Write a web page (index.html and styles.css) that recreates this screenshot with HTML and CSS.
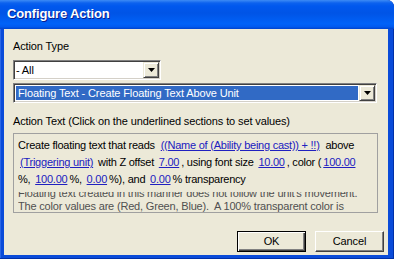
FILE: index.html
```html
<!DOCTYPE html>
<html>
<head>
<meta charset="utf-8">
<link rel="stylesheet" href="styles.css">
</head>
<body>
<div class="window">
  <div class="titlebar"><span class="title">Configure Action</span></div>
  <div class="client">
    <div class="label">Action Type</div>
    <div class="combo combo-short">
      <div class="combo-field"><span class="combo-text">- All</span></div>
      <div class="combo-btn"><svg width="7" height="4" viewBox="0 0 7 4"><path d="M0 0H7L3.5 4Z" fill="#000"/></svg></div>
    </div>
    <div class="combo combo-long">
      <div class="combo-field"><span class="combo-sel">Floating Text - Create Floating Text Above Unit</span></div>
      <div class="combo-btn"><svg width="7" height="4" viewBox="0 0 7 4"><path d="M0 0H7L3.5 4Z" fill="#000"/></svg></div>
    </div>
    <div class="label label-text">Action Text (Click on the underlined sections to set values)</div>
    <div class="textbox">
      <div class="sentence">
        <div class="line">Create floating text that reads <span class="lnk lnk-wide">((Name of (Ability being cast)) + !!)</span> above</div>
        <div class="line"><span class="lnk">(Triggering unit)</span> with Z offset <span class="lnk">7.00</span>, using font size <span class="lnk">10.00</span>, color (<span class="lnk">100.00</span></div>
        <div class="line">%, <span class="lnk">100.00</span>%, <span class="lnk">0.00</span>%), and <span class="lnk">0.00</span>% transparency</div>
      </div>
      <div class="desc-clip">
        <div class="desc">
          <div class="dline">Floating text created in this manner does not follow the unit's movement.</div>
          <div class="dline">The color values are (Red, Green, Blue).&nbsp; A 100% transparent color is</div>
          <div class="dline">invisible.</div>
        </div>
      </div>
    </div>
    <div class="buttons">
      <div class="btn btn-default">OK</div>
      <div class="btn">Cancel</div>
    </div>
  </div>
</div>
</body>
</html>
```
FILE: styles.css
```css
html, body {
  margin: 0;
  padding: 0;
  background: #ffffff;
}
.window {
  width: 394px;
  height: 259px;
  display: flex;
  flex-direction: column;
  background: #0a4bd9;
  box-shadow: inset -1px 0 0 #0030a8, inset 0 -1px 0 #0030a8, inset 1px 0 0 #2a66e6;
  border-top-right-radius: 7px;
  overflow: hidden;
}
.titlebar {
  height: 29px;
  flex: 0 0 29px;
  background: linear-gradient(#3d8bf5 0, #0c62ee 3px, #0058ee 6px, #0054e6 45%, #0062f8 82%, #005af0 92%, #0043cc 100%);
  display: flex;
  align-items: center;
  padding-left: 7px;
  box-sizing: border-box;
}
.title {
  font-family: "Liberation Sans", Arial, sans-serif;
  font-weight: bold;
  font-size: 13px;
  letter-spacing: -0.15px;
  color: #ffffff;
  text-shadow: 1px 1px 0 #0a1c8c;
  margin-top: -2px;
}
.client {
  flex: 1;
  margin: 0 6px 4px 4px;
  background: #ece9d8;
  padding-left: 9px;
  font-family: "Liberation Sans", Arial, sans-serif;
  font-size: 11px;
  letter-spacing: -0.12px;
  color: #000000;
  display: flex;
  flex-direction: column;
}
.label {
  height: 13px;
  line-height: 13px;
  margin-top: 11px;
  white-space: nowrap;
}
.label-text {
  margin-top: 12px;
}
.combo {
  height: 20px;
  box-sizing: border-box;
  display: flex;
  border: 1px solid;
  border-color: #808080 #ffffff #ffffff #808080;
  box-shadow: inset 1px 1px 0 #404040, inset -1px -1px 0 #d4d0c8;
  padding: 1px;
  background: #ffffff;
  margin-top: 7px;
}
.combo-short { width: 148px; }
.combo-long { width: 364px; margin-top: 3px; }
.combo-field {
  flex: 1;
  display: flex;
  align-items: center;
  padding: 1px;
  min-width: 0;
}
.combo-text {
  line-height: 14px;
}
.combo-sel {
  flex: 1;
  background: #316ac5;
  color: #ffffff;
  line-height: 14px;
  height: 14px;
  padding-left: 2px;
  white-space: nowrap;
}
.combo-btn {
  width: 16px;
  height: 16px;
  box-sizing: border-box;
  background: #ece9d8;
  border: 1px solid;
  border-color: #ece9d8 #404040 #404040 #ece9d8;
  box-shadow: inset 1px 1px 0 #ffffff, inset -1px -1px 0 #808080;
  display: flex;
  align-items: center;
  justify-content: center;
}
.combo-btn svg { display: block; margin-left: 1px; }
.textbox {
  width: 365px;
  height: 80px;
  box-sizing: border-box;
  border: 1px solid #a0a0a0;
  margin-top: 5px;
  padding: 3px 4px 0 4px;
  overflow: hidden;
  letter-spacing: -0.24px;
}
.line {
  height: 17px;
  line-height: 17px;
  white-space: nowrap;
}
.lnk {
  color: #2020c0;
  text-decoration: underline;
  padding: 0 2px;
}
.lnk-wide {
  padding: 0 3px;
}
.desc-clip {
  margin-top: 4px;
  overflow: hidden;
  height: 40px;
}
.desc {
  margin-top: -5px;
  color: #505050;
  letter-spacing: -0.18px;
}
.dline {
  height: 12.5px;
  line-height: 12.5px;
  white-space: nowrap;
}
.buttons {
  margin-top: 18px;
  display: flex;
  justify-content: flex-end;
  gap: 9px;
  padding-right: 4px;
}
.btn {
  width: 69px;
  height: 21px;
  box-sizing: border-box;
  border: 1px solid;
  border-color: #ffffff #404040 #404040 #ffffff;
  box-shadow: inset -1px -1px 0 #808080;
  background: #ece9d8;
  display: flex;
  align-items: center;
  justify-content: center;
  line-height: 13px;
}
.btn-default {
  border-color: #000000;
  box-shadow: inset 1px 1px 0 #ffffff, inset -1px -1px 0 #404040, inset -2px -2px 0 #808080;
}
```
